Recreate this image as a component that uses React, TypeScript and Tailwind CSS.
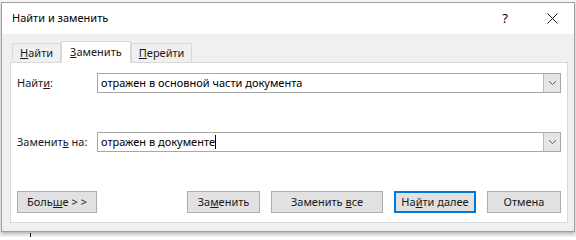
import React from "react";

const font = { fontFamily: '"Segoe UI", "Noto Sans", "Open Sans", sans-serif' };

function Tab({ label, accel, active }: { label: string; accel: string; active?: boolean }) {
  return (
    <div
      className={
        active
          ? "h-[22px] -mb-px px-[8px] bg-white border border-b-0 border-[#d9d9d9] flex items-center z-10"
          : "h-[19px] px-[7px] bg-[#f0f0f0] border border-b-0 border-[#d9d9d9] flex items-center"
      }
    >
      <span>
        <u>{accel}</u>
        {label}
      </span>
    </div>
  );
}

function Combo({ value, caret }: { value: string; caret?: boolean }) {
  return (
    <div className="flex-1 h-[20px] flex border border-[#a8a8a8] bg-white">
      <div className="flex-1 flex items-center pl-[3px] text-black">
        {value}
        {caret && <span className="w-px h-[14px] bg-black" />}
      </div>
      <div className="w-[17px] h-[18px] bg-[#e5e5e5] border-l border-[#b9b9b9] flex items-center justify-center">
        <svg width="9" height="6" viewBox="0 0 9 6">
          <path d="M1 1.2 L4.5 4.5 L8 1.2" fill="none" stroke="#5f5f5f" strokeWidth="1" />
        </svg>
      </div>
    </div>
  );
}

function Btn({ children, w, primary }: { children: React.ReactNode; w: string; primary?: boolean }) {
  return (
    <div
      className={
        "h-[22px] flex items-center justify-center bg-[#e1e1e1] " +
        w +
        (primary ? " border-2 border-[#0078d7]" : " border border-[#adadad]")
      }
    >
      {children}
    </div>
  );
}

export default function App() {
  return (
    <div className="w-[576px] h-[237px] bg-[#f5f5f5] pt-[2px] pl-[1px] overflow-hidden text-[11px] text-[#1a1a1a]" style={font}>
      <div className="w-[574px] h-[230px] border border-[#9e9e9e] bg-[#f0f0f0] flex flex-col shadow-[0_2px_3px_rgba(0,0,0,0.25)]">
        {/* title bar */}
        <div className="h-[31px] bg-white flex items-center">
          <div className="pl-[10px] flex-1 text-black text-[11px]">Найти и заменить</div>
          <div className="w-[46px] h-full flex items-center justify-center text-[13px] text-black">?</div>
          <div className="w-[46px] h-full flex items-center justify-center pl-[2px]">
            <svg width="11" height="11" viewBox="0 0 11 11">
              <path d="M0.5 0.5 L10.5 10.5 M10.5 0.5 L0.5 10.5" stroke="#1a1a1a" strokeWidth="1" />
            </svg>
          </div>
        </div>

        {/* body */}
        <div className="flex-1 flex flex-col pt-[7px] pl-[8px] pr-[6px] pb-[8px]">
          <div className="h-[21px] flex items-end pl-[2px]">
            <Tab accel="Н" label="айти" />
            <Tab accel="З" label="аменить" active />
            <Tab accel="П" label="ерейти" />
          </div>
          <div className="h-[161px] bg-white border border-[#d9d9d9] pt-[10px] px-[6px] flex flex-col">
            <div className="flex items-center">
              <div className="w-[80px]">
                Найт<u>и</u>:
              </div>
              <Combo value="отражен в основной части документа" />
            </div>
            <div className="flex items-center mt-[39px]">
              <div className="w-[80px]">
                Заменит<u>ь</u> на:
              </div>
              <Combo value="отражен в документе" caret />
            </div>
            <div className="flex items-center justify-between mt-[39px]">
              <Btn w="w-[80px]">
                <span>
                  Боль<u>ш</u>е &gt; &gt;
                </span>
              </Btn>
              <div className="flex gap-[11px]">
                <Btn w="w-[73px]">
                  <span>
                    За<u>м</u>енить
                  </span>
                </Btn>
                <Btn w="w-[112px]">
                  <span>
                    Заменить <u>в</u>се
                  </span>
                </Btn>
                <Btn w="w-[82px]" primary>
                  <span>
                    На<u>й</u>ти далее
                  </span>
                </Btn>
                <Btn w="w-[74px]">
                  <span>Отмена</span>
                </Btn>
              </div>
            </div>
          </div>
        </div>
      </div>
      <div className="ml-[29px] mt-px w-px h-[4px] bg-black" />
    </div>
  );
}
